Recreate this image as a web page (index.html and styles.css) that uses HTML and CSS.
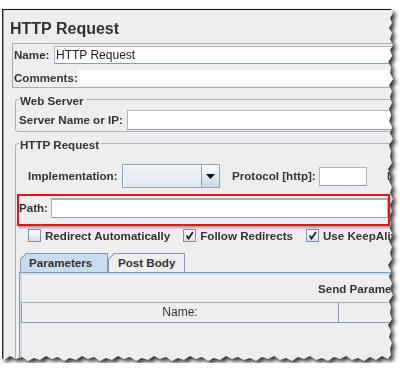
FILE: index.html
```html
<!DOCTYPE html>
<html lang="en">
<head>
    <meta charset="UTF-8">
    <meta name="viewport" content="width=device-width, initial-scale=1.0">
    <title>HTTP Request</title>
    <link rel="stylesheet" href="styles.css">
</head>
<body>
    <div class="shot">
        <div class="window">
            <div class="content">
                <h1 class="title">HTTP Request</h1>

                <!-- Name and comments -->
                <div class="name-panel">
                    <div class="row name-row">
                        <span class="label name-label">Name:</span>
                        <div class="field name-field">HTTP Request</div>
                    </div>
                    <div class="row comments-row">
                        <span class="label comments-label">Comments:</span>
                        <div class="comments"></div>
                    </div>
                </div>

                <!-- Web server -->
                <fieldset class="group">
                    <legend>Web Server</legend>
                    <div class="row server-row">
                        <span class="label server-label">Server Name or IP:</span>
                        <div class="field server-field"></div>
                    </div>
                </fieldset>

                <!-- HTTP request -->
                <fieldset class="group request">
                    <legend>HTTP Request</legend>
                    <div class="row impl-row">
                        <span class="label impl-label">Implementation:</span>
                        <div class="combo">
                            <div class="combo-box"></div>
                            <div class="combo-btn">
                                <svg width="9" height="5" viewBox="0 0 9 5"><polygon points="0,0 9,0 4.5,5" fill="#111"/></svg>
                            </div>
                        </div>
                        <span class="label protocol-label">Protocol [http]:</span>
                        <div class="field protocol-field"></div>
                        <span class="label method-label">Method:</span>
                    </div>

                    <div class="row path-box">
                        <span class="label path-label">Path:</span>
                        <div class="field path-field"></div>
                    </div>

                    <div class="checks">
                        <div class="check"><span class="box"></span>Redirect Automatically</div>
                        <div class="check"><span class="box"><svg width="9" height="9" viewBox="0 0 9 9"><polyline points="1.5,4.5 3.5,7.5 8,1" fill="none" stroke="#222" stroke-width="1.8"/></svg></span>Follow Redirects</div>
                        <div class="check"><span class="box"><svg width="9" height="9" viewBox="0 0 9 9"><polyline points="1.5,4.5 3.5,7.5 8,1" fill="none" stroke="#222" stroke-width="1.8"/></svg></span>Use KeepAlive</div>
                    </div>

                    <div class="tabs">
                        <div class="tab active">Parameters</div>
                        <div class="tab">Post Body</div>
                    </div>
                    <div class="tab-panel">
                        <div class="table-title">Send Parameters With the Request:</div>
                        <div class="table-head">
                            <div class="col name-col">Name:</div>
                            <div class="col">Value:</div>
                        </div>
                    </div>
                </fieldset>
            </div>
        </div>
    </div>
</body>
</html>
```

FILE: styles.css
```css
body {
    margin: 0;
    background-color: #fff;
    font-family: 'Liberation Sans', Arial, sans-serif;
    color: #333;
    overflow: hidden;
}

/* Screenshot frame with torn edge */
.shot {
    padding: 9px 0 0 2px;
    filter: drop-shadow(3px 3px 2px rgba(0, 0, 0, 0.8));
}

.window {
    width: 392px;
    height: 354px;
    box-sizing: border-box;
    background-color: #eeeeee;
    border-top: 1px solid #111;
    border-left: 1px solid #222;
    box-shadow: inset 1px 0 0 #a0a0a0;
    overflow: hidden;
    clip-path: polygon(0 0, 389px 0, 391px 4px, 388px 9px, 390px 14px, 387px 19px, 390px 24px, 388px 30px, 391px 36px, 388px 41px, 390px 47px, 386px 53px, 389px 58px, 388px 64px, 391px 70px, 387px 76px, 390px 82px, 388px 88px, 390px 94px, 387px 100px, 389px 106px, 387px 112px, 390px 118px, 388px 124px, 391px 130px, 387px 136px, 389px 142px, 388px 148px, 390px 154px, 386px 160px, 389px 166px, 387px 172px, 390px 178px, 388px 184px, 391px 190px, 388px 196px, 390px 202px, 387px 208px, 389px 214px, 388px 220px, 391px 226px, 387px 232px, 390px 238px, 388px 244px, 390px 250px, 386px 256px, 389px 262px, 387px 268px, 390px 274px, 388px 280px, 391px 286px, 387px 292px, 389px 298px, 388px 304px, 390px 310px, 386px 316px, 389px 322px, 387px 328px, 390px 334px, 388px 340px, 389px 346px, 386px 350px, 380px 347px, 374px 351px, 368px 348px, 362px 352px, 356px 349px, 350px 351px, 344px 347px, 338px 350px, 332px 348px, 326px 352px, 320px 349px, 314px 351px, 308px 347px, 302px 350px, 296px 348px, 290px 352px, 284px 349px, 278px 351px, 272px 347px, 266px 350px, 260px 348px, 254px 352px, 248px 349px, 242px 351px, 236px 348px, 230px 350px, 224px 347px, 218px 351px, 212px 349px, 206px 352px, 200px 348px, 194px 350px, 188px 347px, 182px 351px, 176px 349px, 170px 352px, 164px 348px, 158px 350px, 152px 347px, 146px 351px, 140px 349px, 134px 352px, 128px 348px, 122px 350px, 116px 347px, 110px 351px, 104px 349px, 98px 352px, 92px 348px, 86px 350px, 80px 347px, 74px 351px, 68px 349px, 62px 352px, 56px 348px, 50px 350px, 44px 347px, 38px 351px, 32px 349px, 26px 352px, 20px 348px, 14px 350px, 8px 347px, 2px 351px, 0 349px);
}

.content {
    width: 560px;
    padding: 9px 0 0 7px;
}

.title {
    margin: 0;
    font-size: 16px;
    line-height: 19px;
    font-weight: bold;
    color: #333;
}

/* Generic rows, labels, fields */
.row {
    display: flex;
    align-items: center;
}

.label {
    flex-shrink: 0;
    font-size: 11.6px;
    line-height: 14px;
    font-weight: bold;
    white-space: nowrap;
    color: #333;
}

.field {
    display: flex;
    align-items: center;
    box-sizing: border-box;
    padding-left: 1px;
    background-color: #fff;
    border: 1px solid #a9b5c2;
    border-bottom-color: #8a9cb2;
    font-size: 12px;
    color: #222;
    white-space: nowrap;
}

/* Name panel */
.name-panel {
    margin: 5px 0 0 2px;
    padding: 2px 0 1px 1px;
    border: 1px solid #ababab;
}

.name-row {
    height: 18px;
}

.name-label {
    width: 40px;
}

.name-field {
    flex: 1;
    height: 18px;
}

.comments-row {
    margin-top: 6px;
    height: 16px;
}

.comments-label {
    width: 64px;
}

.comments {
    flex: 1;
    height: 16px;
    background-color: #fff;
}

/* Titled groups */
.group {
    margin: 4px 0 0 5px;
    padding: 0 0 1px 3px;
    border: 1px solid #b4b4b4;
    border-radius: 3px;
    min-width: 0;
}

.group legend {
    padding: 3px 2px 0 1px;
    font-size: 11.6px;
    line-height: 12px;
    font-weight: bold;
    color: #333;
}

.server-row {
    margin-top: 3px;
    height: 20px;
}

.server-label {
    width: 108px;
}

.server-field {
    flex: 1;
    height: 20px;
}

.request {
    padding-bottom: 0;
}

/* Implementation / protocol */
.impl-row {
    margin-top: 13px;
    padding-left: 9px;
    height: 24px;
}

.impl-label {
    width: 94px;
}

.combo {
    display: flex;
    width: 98px;
    height: 24px;
    box-sizing: border-box;
    border: 1px solid #8fa2b8;
    margin-right: 12px;
    flex-shrink: 0;
}

.combo-box {
    flex: 1;
    background: linear-gradient(#f1f4f8, #e2e8ef);
    box-shadow: inset 1px 1px 0 #fff;
}

.combo-btn {
    width: 17px;
    display: flex;
    align-items: center;
    justify-content: center;
    border-left: 1px solid #8fa2b8;
    background: linear-gradient(#ffffff, #c9d8e8);
}

.protocol-label {
    width: 87px;
}

.protocol-field {
    width: 48px;
    height: 19px;
    flex-shrink: 0;
}

.method-label {
    margin-left: 20px;
}

/* Path (highlighted) */
.path-box {
    width: 373px;
    height: 32px;
    box-sizing: border-box;
    margin: 6px 0 0 -2px;
    padding-bottom: 4px;
    border: 2px solid #e3151b;
    box-shadow: 1px 2px 2px rgba(0, 0, 0, 0.3);
}

.path-label {
    width: 32px;
}

.path-field {
    flex: 1;
    height: 20px;
    border-top: 2px solid #a4adb7;
}

/* Checkboxes */
.checks {
    display: flex;
    margin-top: 3px;
    padding-left: 9px;
    height: 13px;
    align-items: center;
}

.check {
    display: flex;
    align-items: center;
    margin-right: 13px;
    font-size: 11.6px;
    line-height: 13px;
    font-weight: bold;
    white-space: nowrap;
    flex-shrink: 0;
}

.box {
    width: 13px;
    height: 13px;
    box-sizing: border-box;
    margin-right: 4px;
    border: 1px solid #7d91a9;
    background: linear-gradient(#ffffff, #d3deea);
    display: flex;
    align-items: center;
    justify-content: center;
}

/* Tabs */
.tabs {
    display: flex;
    margin-top: 11px;
    padding-left: 1px;
    height: 19px;
}

.tab {
    height: 19px;
    box-sizing: border-box;
    border: 1px solid #8397ae;
    border-bottom: none;
    font-size: 11.6px;
    line-height: 18px;
    font-weight: bold;
    white-space: nowrap;
    background: linear-gradient(135deg, #8397ae 0 5.5px, #eeeeee 5.5px) border-box;
    clip-path: polygon(6px 0, 100% 0, 100% 100%, 0 100%, 0 6px);
    width: 77px;
    padding-left: 9px;
}

.tab.active {
    width: 88px;
    padding-left: 8px;
    background: linear-gradient(135deg, #8397ae 0 5.5px, #c8dcf2 5.5px) border-box;
}

.tab-panel {
    height: 130px;
    box-sizing: border-box;
    padding-left: 1px;
    border: 1px solid #8397ae;
    box-shadow: inset 0 0 0 2px #c8dcf2;
}

.table-title {
    margin-top: 9px;
    padding-left: 297px;
    font-size: 11.6px;
    line-height: 14px;
    font-weight: bold;
    white-space: nowrap;
}

.table-head {
    display: flex;
    margin-top: 6px;
    height: 21px;
    box-sizing: border-box;
    border-top: 1px solid #a9b1ba;
    border-bottom: 1px solid #8a9db4;
    border-left: 1px solid #8a9db4;
}

.col {
    font-size: 12px;
    line-height: 19px;
    text-align: center;
    color: #333;
    width: 200px;
}

.name-col {
    width: 316px;
    border-right: 1px solid #8a9db4;
}
```
